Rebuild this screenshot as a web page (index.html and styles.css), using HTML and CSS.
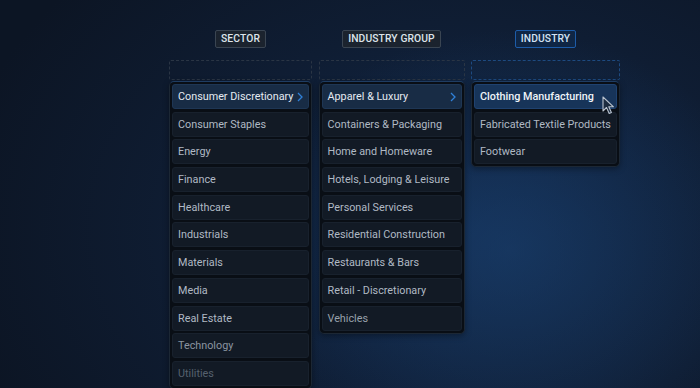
FILE: index.html
```html
<!DOCTYPE html>
<html lang="en">
<head>
    <meta charset="UTF-8">
    <meta name="viewport" content="width=device-width, initial-scale=1.0">
    <title>Industry classification</title>
    <link rel="stylesheet" href="styles.css">
</head>
<body>
    <div class="picker">
        <div class="column col-sector">
            <div class="head"><span class="badge">Sector</span></div>
            <div class="drop"></div>
            <div class="panel">
                <div class="item active">Consumer Discretionary
                    <svg class="chev" width="6" height="10" viewBox="0 0 6 10"><polyline points="1,1 5,5 1,9" fill="none" stroke="#2f80d8" stroke-width="1.3"/></svg>
                </div>
                <div class="item">Consumer Staples</div>
                <div class="item">Energy</div>
                <div class="item">Finance</div>
                <div class="item">Healthcare</div>
                <div class="item">Industrials</div>
                <div class="item">Materials</div>
                <div class="item">Media</div>
                <div class="item">Real Estate</div>
                <div class="item dim">Technology</div>
                <div class="item faint">Utilities</div>
            </div>
        </div>

        <div class="column col-group">
            <div class="head"><span class="badge">Industry Group</span></div>
            <div class="drop"></div>
            <div class="panel">
                <div class="item active">Apparel &amp; Luxury
                    <svg class="chev" width="6" height="10" viewBox="0 0 6 10"><polyline points="1,1 5,5 1,9" fill="none" stroke="#2f80d8" stroke-width="1.3"/></svg>
                </div>
                <div class="item">Containers &amp; Packaging</div>
                <div class="item">Home and Homeware</div>
                <div class="item">Hotels, Lodging &amp; Leisure</div>
                <div class="item">Personal Services</div>
                <div class="item">Residential Construction</div>
                <div class="item">Restaurants &amp; Bars</div>
                <div class="item">Retail - Discretionary</div>
                <div class="item soft">Vehicles</div>
            </div>
        </div>

        <div class="column col-industry current">
            <div class="head"><span class="badge">Industry</span></div>
            <div class="drop"></div>
            <div class="panel">
                <div class="item active">Clothing Manufacturing</div>
                <div class="item">Fabricated Textile Products</div>
                <div class="item">Footwear</div>
            </div>
        </div>
    </div>

    <svg class="cursor" width="14" height="19" viewBox="0 0 14 19">
        <path d="M1 1 L1 15 L4.5 11.5 L7.2 17.5 L9.4 16.5 L6.8 10.8 L11.5 10.8 Z" fill="#1c2c40" stroke="#b8c2ce" stroke-width="1.1" stroke-linejoin="round"/>
    </svg>
</body>
</html>
```

FILE: styles.css
```css
html, body {
    margin: 0;
    height: 100%;
}
body {
    font-family: Roboto, "Noto Sans", sans-serif;
    background:
        radial-gradient(ellipse 260px 220px at 510px 250px, rgba(28, 70, 120, 0.5), rgba(20, 50, 90, 0) 100%),
        radial-gradient(ellipse 520px 380px at 470px 230px, #11284a 0%, #0f1d33 55%, #0c1524 100%);
    overflow: hidden;
    position: relative;
}
.picker {
    display: flex;
    gap: 6.5px;
    padding: 30px 0 0 169px;
    align-items: flex-start;
}
.column {
    display: flex;
    flex-direction: column;
}
.col-sector { width: 143px; }
.col-group { width: 146px; }
.col-industry { width: 149px; }

.head {
    display: flex;
    justify-content: center;
    margin-bottom: 12px;
}
.badge {
    height: 16px;
    line-height: 16px;
    padding: 0 5px;
    background: #1b232e;
    border: 1px solid #3a4552;
    border-radius: 2px;
    color: #dde3ea;
    font-size: 10.3px;
    font-weight: 500;
    letter-spacing: 0.1px;
    text-transform: uppercase;
}
.current .badge {
    background: #0f2645;
    border-color: #1d5ca8;
    color: #d3e2f4;
}

.drop {
    height: 18px;
    border: 1px dashed #2a3544;
    border-radius: 2px;
    margin-bottom: 1px;
}
.current .drop {
    border-color: #1d4a80;
}

.panel {
    display: flex;
    flex-direction: column;
    gap: 2.7px;
    padding: 2px;
    background: #090e15;
    border: 1px solid #1c2734;
    border-top-color: #1f3d63;
    border-radius: 5px;
    box-shadow: 0 2px 6px rgba(0, 0, 0, 0.35);
}
.item {
    display: flex;
    align-items: center;
    justify-content: space-between;
    height: 25px;
    padding: 0 5px;
    box-sizing: border-box;
    background: #121a25;
    border: 1px solid #18212d;
    border-radius: 3px;
    color: #b0b9c4;
    font-size: 10.8px;
    white-space: nowrap;
}
.item.active {
    background: #182c45;
    border-color: #1e3654;
    color: #e4eaf1;
}
.current .item.active {
    background: #173459;
    border-color: #1f4270;
    color: #eef3f8;
    font-weight: 500;
}
.item.dim { color: #8a94a0; }
.item.soft { color: #98a1ac; }
.item.faint { color: #56616e; }

.chev {
    flex: none;
}

.cursor {
    position: absolute;
    left: 602px;
    top: 96px;
}
```
